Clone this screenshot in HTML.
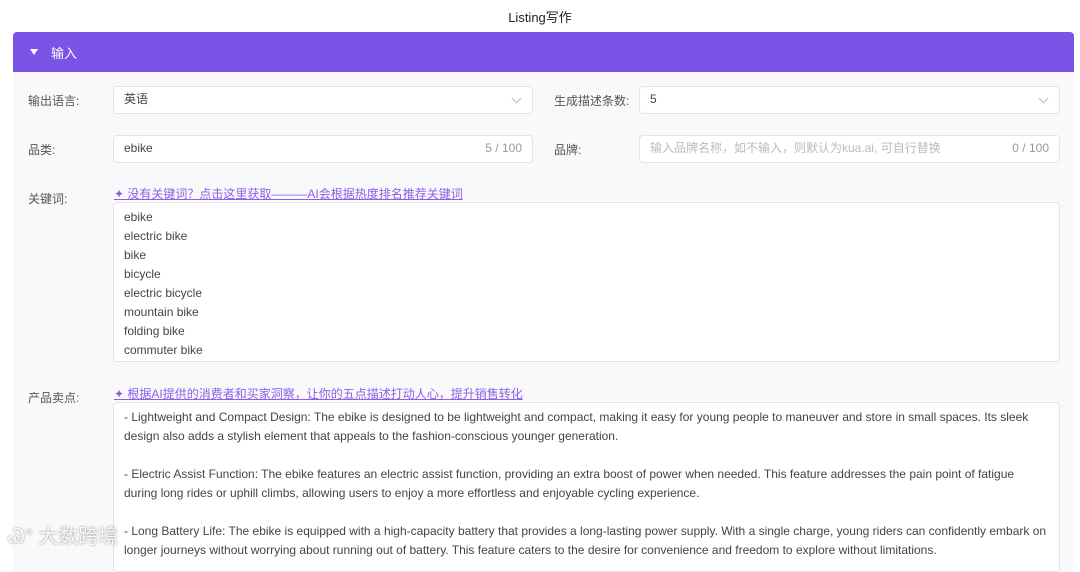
<!DOCTYPE html>
<html><head><meta charset="utf-8"><style>
*{margin:0;padding:0;box-sizing:border-box}
body{width:1080px;height:554px;overflow:hidden;background:#fff;font-family:"Liberation Sans","Noto Sans CJK SC",sans-serif;color:#444;font-size:12px;position:relative}
.abs{position:absolute}
.title{top:7px;left:0;width:1080px;text-align:center;font-size:13px;color:#222}
.panel{left:13px;top:32px;width:1061px;height:540px;background:#f9f9fb;border-radius:4px}
.head{left:13px;top:32px;width:1061px;height:40px;background:#7b53e6;border-radius:4px 4px 0 0;color:#fff;font-size:13px}
.tri{position:absolute;left:17px;top:17px;width:0;height:0;border-left:4px solid transparent;border-right:4px solid transparent;border-top:6px solid #fff}
.lab{color:#555;font-size:12px}
.inp{background:#fff;border:1px solid #e3e3e8;border-radius:4px;height:28px;line-height:25px;padding-left:10px;font-size:12px;color:#444}
.cnt{position:absolute;right:10px;top:0;color:#999}
.chev{position:absolute;right:12px;top:8px;width:7px;height:7px;border-right:1px solid #bbb;border-bottom:1px solid #bbb;transform:rotate(45deg)}
.link{color:#8b5fe8;text-decoration:underline;font-size:12px}
.ta{background:#fff;border:1px solid #e3e3e8;border-radius:4px;padding:5px 10px;font-size:12px;line-height:19px;color:#444}
</style></head><body>
<div class="abs title">Listing写作</div>
<div class="abs panel"></div>
<div class="abs head"><span class="tri"></span><span style="position:absolute;left:38px;top:11px">输入</span></div>

<div class="abs lab" style="left:28px;top:92px">输出语言:</div>
<div class="abs inp" style="left:113px;top:86px;width:420px">英语<span class="chev"></span></div>
<div class="abs lab" style="left:554px;top:92px">生成描述条数:</div>
<div class="abs inp" style="left:639px;top:86px;width:421px">5<span class="chev"></span></div>

<div class="abs lab" style="left:28px;top:141px">品类:</div>
<div class="abs inp" style="left:113px;top:135px;width:420px">ebike<span class="cnt">5 / 100</span></div>
<div class="abs lab" style="left:554px;top:141px">品牌:</div>
<div class="abs inp" style="left:639px;top:135px;width:421px;color:#bbb">输入品牌名称，如不输入，则默认为kua.ai, 可自行替换<span class="cnt">0 / 100</span></div>

<div class="abs lab" style="left:28px;top:190px">关键词:</div>
<div class="abs link" style="left:114px;top:185px"><span style="text-decoration:none">✦</span> 没有关键词？点击这里获取———AI会根据热度排名推荐关键词</div>
<div class="abs ta" style="left:113px;top:202px;width:947px;height:160px">ebike<br>electric bike<br>bike<br>bicycle<br>electric bicycle<br>mountain bike<br>folding bike<br>commuter bike</div>

<div class="abs lab" style="left:28px;top:389px">产品卖点:</div>
<div class="abs link" style="left:114px;top:385px"><span style="text-decoration:none">✦</span> 根据AI提供的消费者和买家洞察，让你的五点描述打动人心，提升销售转化</div>
<div class="abs ta" style="left:113px;top:402px;width:947px;height:170px">- Lightweight and Compact Design: The ebike is designed to be lightweight and compact, making it easy for young people to maneuver and store in small spaces. Its sleek design also adds a stylish element that appeals to the fashion-conscious younger generation.<br><br>- Electric Assist Function: The ebike features an electric assist function, providing an extra boost of power when needed. This feature addresses the pain point of fatigue during long rides or uphill climbs, allowing users to enjoy a more effortless and enjoyable cycling experience.<br><br>- Long Battery Life: The ebike is equipped with a high-capacity battery that provides a long-lasting power supply. With a single charge, young riders can confidently embark on longer journeys without worrying about running out of battery. This feature caters to the desire for convenience and freedom to explore without limitations.</div>
<div class="abs" style="left:8px;top:520px;color:rgba(255,255,255,.9);font-size:20px;text-shadow:0 0 2px #888">Ꮚ° 大数跨境</div>
</body></html>
